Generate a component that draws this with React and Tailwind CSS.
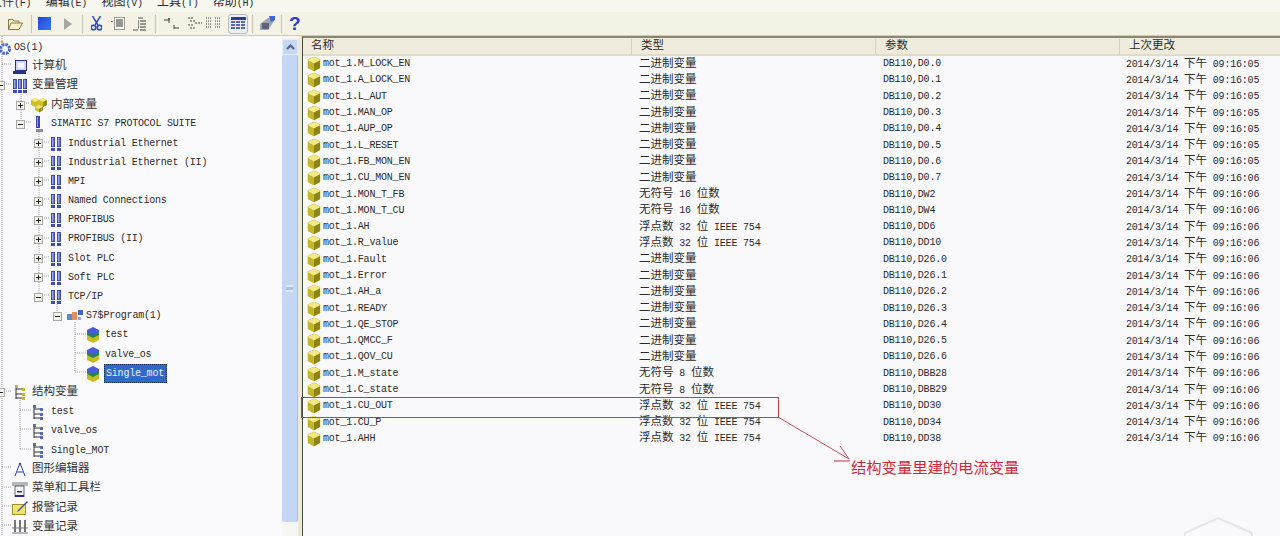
const BIN = "二进制变量";
const U16 = "无符号 16 位数";
const U8 = "无符号 8 位数";
const F32 = "浮点数 32 位 IEEE 754";

const rows = [
  ["M_LOCK_EN", BIN, "D0.0", "05"],
  ["A_LOCK_EN", BIN, "D0.1", "05"],
  ["L_AUT", BIN, "D0.2", "05"],
  ["MAN_OP", BIN, "D0.3", "05"],
  ["AUP_OP", BIN, "D0.4", "05"],
  ["L_RESET", BIN, "D0.5", "05"],
  ["FB_MON_EN", BIN, "D0.6", "05"],
  ["CU_MON_EN", BIN, "D0.7", "06"],
  ["MON_T_FB", U16, "DW2", "06"],
  ["MON_T_CU", U16, "DW4", "06"],
  ["AH", F32, "DD6", "06"],
  ["R_value", F32, "DD10", "06"],
  ["Fault", BIN, "D26.0", "06"],
  ["Error", BIN, "D26.1", "06"],
  ["AH_a", BIN, "D26.2", "06"],
  ["READY", BIN, "D26.3", "06"],
  ["QE_STOP", BIN, "D26.4", "06"],
  ["QMCC_F", BIN, "D26.5", "06"],
  ["QOV_CU", BIN, "D26.6", "06"],
  ["M_state", U8, "DBB28", "06"],
  ["C_state", U8, "DBB29", "06"],
  ["CU_OUT", F32, "DD30", "06"],
  ["CU_P", F32, "DD34", "06"],
  ["AHH", F32, "DD38", "06"],
];

const levels = {
  os: { row: "-ml-[3px]", slot: "w-0", label: "ml-[1px]" },
  l0: { row: "-ml-[4px]", slot: "w-[9px] mr-[7px]", label: "ml-[4px]" },
  l1: { row: "ml-[16px]", slot: "w-[9px] mr-[6px]", label: "ml-[4px]" },
  l2: { row: "ml-[34px]", slot: "w-[9px] mr-[6px]", label: "ml-[3px]" },
  l3: { row: "ml-[53px]", slot: "w-[9px] mr-[5px]", label: "ml-[3px]" },
  l4: { row: "ml-[69px]", slot: "w-[9px] mr-[7px]", label: "ml-[4px]" },
  s1: { row: "ml-[15px]", slot: "w-[9px] mr-[6px]", label: "ml-[5px]" },
};

const tree = [
  { lv: "os", icon: "gear", text: "OS(1)" },
  { lv: "l0", icon: "pc", text: "计算机" },
  { lv: "l0", exp: "-", icon: "bars3", text: "变量管理" },
  { lv: "l1", exp: "+", icon: "cubes", text: "内部变量" },
  { lv: "l1", exp: "-", icon: "bar1", text: "SIMATIC S7 PROTOCOL SUITE" },
  { lv: "l2", exp: "+", icon: "bars2", text: "Industrial Ethernet" },
  { lv: "l2", exp: "+", icon: "bars2", text: "Industrial Ethernet (II)" },
  { lv: "l2", exp: "+", icon: "bars2", text: "MPI" },
  { lv: "l2", exp: "+", icon: "bars2", text: "Named Connections" },
  { lv: "l2", exp: "+", icon: "bars2", text: "PROFIBUS" },
  { lv: "l2", exp: "+", icon: "bars2", text: "PROFIBUS (II)" },
  { lv: "l2", exp: "+", icon: "bars2", text: "Slot PLC" },
  { lv: "l2", exp: "+", icon: "bars2", text: "Soft PLC" },
  { lv: "l2", exp: "-", icon: "bars2", text: "TCP/IP" },
  { lv: "l3", exp: "-", icon: "prog", text: "S7$Program(1)" },
  { lv: "l4", icon: "stack", text: "test" },
  { lv: "l4", icon: "stack", text: "valve_os" },
  { lv: "l4", icon: "stack", text: "Single_mot", selected: true },
  { lv: "l0", exp: "-", icon: "struct", text: "结构变量" },
  { lv: "s1", icon: "ladder", text: "test" },
  { lv: "s1", icon: "ladder", text: "valve_os" },
  { lv: "s1", icon: "ladder", text: "Single_MOT" },
  { lv: "l0", icon: "compass", text: "图形编辑器" },
  { lv: "l0", icon: "menu", text: "菜单和工具栏" },
  { lv: "l0", icon: "alarm", text: "报警记录" },
  { lv: "l0", icon: "log", text: "变量记录" },
];

// CJK runs get their own size, the latin next to them is a narrow mono
function T({ children, cjk = "text-[11.5px]" }) {
  return String(children)
    .split(/([\u4e00-\u9fff]+)/)
    .map((part, i) =>
      /[\u4e00-\u9fff]/.test(part) ? (
        <span key={i} className={`${cjk} leading-none tracking-normal font-['Noto_Sans_CJK_SC',sans-serif]`}>{part}</span>
      ) : (
        <span key={i}>{part}</span>
      )
    );
}

function Cube() {
  return (
    <svg width="14" height="16" viewBox="0 0 14 16">
      <path d="M7 1.5 L12.5 4 V11.5 L7 14.5 L1.5 11.5 V4 Z" fill="#c4b62a" stroke="#c4b62a" strokeWidth="1.6" strokeLinejoin="round" />
      <path d="M7 1.5 L12.5 4 L7 7 L1.5 4 Z" fill="#f3ea86" stroke="#f3ea86" strokeLinejoin="round" />
      <path d="M13 4.5 L7 7.5 V15 L13 12 Z" fill="#8d8416" />
    </svg>
  );
}

function Bars({ n }) {
  const xs = n === 3 ? [1, 6, 11] : n === 2 ? [2, 8] : [5];
  return (
    <svg width="16" height="16" viewBox="0 0 16 16">
      {xs.map((x) => (
        <g key={x}>
          <rect x={x} y="1" width="4" height="10" fill="#3f4cae" />
          <rect x={x + 1} y="2" width="1.5" height="8" fill="#9aa5e4" />
          <rect x={x} y="12" width="4" height="3" fill="#3f4cae" />
        </g>
      ))}
    </svg>
  );
}

function Ladder({ yellow }) {
  const c = yellow ? "#c9b82a" : "#5a68b8";
  return (
    <svg width="14" height="15" viewBox="0 0 14 15">
      <path d="M3 1 V14 M3 4 H11 M3 9 H11 M3 13 H11" stroke="#333" fill="none" />
      <rect x="2" y="0" width="3" height="3" fill={c} />
      <rect x="9" y="3" width="3" height="3" fill={c} />
      <rect x="9" y="8" width="3" height="3" fill={c} />
      <rect x="9" y="12" width="3" height="3" fill={c} />
    </svg>
  );
}

function TreeIcon({ name }) {
  switch (name) {
    case "gear":
      return (
        <svg width="16" height="16" viewBox="0 0 16 16">
          <circle cx="8" cy="9" r="4.5" fill="none" stroke="#4a68c8" strokeWidth="3" strokeDasharray="2.5 1" />
          <circle cx="8" cy="9" r="2" fill="#fff" />
          <circle cx="5" cy="2" r="1.5" fill="#d8b040" />
        </svg>
      );
    case "pc":
      return (
        <svg width="15" height="16" viewBox="0 0 15 16">
          <rect x="2.5" y="1.5" width="11" height="10" fill="#eef0fa" stroke="#2a3480" />
          <rect x="4" y="3" width="8" height="7" fill="#f8f8ff" stroke="#8a90c0" strokeWidth="0.5" />
          <rect x="0" y="12" width="13" height="3" fill="#28308a" />
        </svg>
      );
    case "bars3":
      return <Bars n={3} />;
    case "bars2":
      return <Bars n={2} />;
    case "bar1":
      return (
        <svg width="16" height="16" viewBox="0 0 16 16">
          <rect x="5" y="0" width="4" height="12" fill="#3a47a8" />
          <rect x="6" y="1" width="1" height="10" fill="#8f9be0" />
          <rect x="5" y="13" width="7" height="3" fill="#8a8aa0" />
        </svg>
      );
    case "cubes":
      return (
        <svg width="16" height="16" viewBox="0 0 16 16">
          <path d="M4 1 L8 3 L12 1 L16 3 V8 L12 10 V13 L8 15.5 L4 13 V10 L0 8 V3 Z" fill="#cfc02c" />
          <path d="M4 1 L8 3 L4 5 L0 3 Z M12 1 L16 3 L12 5 L8 3 Z M8 8 L12 10 L8 12 L4 10 Z" fill="#f4e774" />
          <path d="M8 12 V15.5 L12 13 V10 Z M12 5 V10 L16 8 V3 Z" fill="#958a18" />
        </svg>
      );
    case "prog":
      return (
        <svg width="16" height="12" viewBox="0 0 16 12">
          <rect x="0" y="4" width="5" height="6" fill="#5a8ad0" />
          <rect x="5" y="2" width="5" height="8" fill="#e09058" />
          <rect x="11" y="0" width="5" height="5" fill="#3a68d0" />
          <rect x="11" y="7" width="3" height="3" fill="#90a8d8" />
        </svg>
      );
    case "stack":
      return (
        <svg width="14" height="16" viewBox="0 0 14 16">
          <path d="M7 0 L13 3 V7 L7 10 L1 7 V3 Z" fill="#4a5ad8" />
          <path d="M1 5 L7 8 L13 5 V9 L7 12 L1 9 Z" fill="#1e8a50" />
          <path d="M1 8 L7 11 L13 8 V13 L7 16 L1 13 Z" fill="#c9bc20" />
        </svg>
      );
    case "struct":
      return <Ladder yellow />;
    case "ladder":
      return <Ladder />;
    case "compass":
      return (
        <svg width="14" height="16" viewBox="0 0 14 16">
          <path d="M7 1 L2 14 M7 1 L12 14 M4 10 L10 10" stroke="#2a48b8" strokeWidth="1" fill="none" />
          <circle cx="7" cy="2" r="1.3" fill="#555" />
        </svg>
      );
    case "menu":
      return (
        <svg width="16" height="16" viewBox="0 0 16 16">
          <rect x="0" y="1" width="16" height="4" fill="#b8b8c0" />
          <rect x="3" y="5" width="9" height="11" fill="#f4f4f8" stroke="#444" strokeWidth="0.8" />
          <rect x="5" y="10" width="5" height="1.5" fill="#2a3090" />
          <rect x="3" y="14" width="9" height="2" fill="#2a3090" />
        </svg>
      );
    case "alarm":
      return (
        <svg width="16" height="14" viewBox="0 0 16 14">
          <rect x="0.5" y="3.5" width="13" height="10" fill="#f2e26a" stroke="#a09028" />
          <path d="M15 0 L6 9 L5 11 L7 10 L16 1 Z" fill="#3858c0" />
        </svg>
      );
    default:
      return (
        <svg width="16" height="16" viewBox="0 0 16 16">
          <path d="M3 1 V13 M8 1 V13 M13 1 V13" stroke="#555" strokeWidth="1.6" />
          <path d="M0 9 H16 M0 14 H16" stroke="#777" />
        </svg>
      );
  }
}

function Expander({ sign }) {
  return (
    <div className="w-[9px] h-[9px] border border-[#a8a8a8] bg-[#f4f4ec] flex items-center justify-center relative">
      <div className="w-[5px] h-px bg-[#222]" />
      {sign === "+" && <div className="absolute w-px h-[5px] bg-[#222]" />}
    </div>
  );
}

function TreeRow({ item }) {
  const lv = levels[item.lv];
  return (
    <div className={`flex items-center h-[19.2px] leading-[14px] ${lv.row}`}>
      <div className={`shrink-0 ${lv.slot}`}>{item.exp && <Expander sign={item.exp} />}</div>
      <div className="w-[16px] h-[16px] shrink-0 flex items-center justify-center">
        <TreeIcon name={item.icon} />
      </div>
      {item.selected ? (
        <div className="ml-[3px] w-[63px] h-[19px] bg-[#316ac5] text-[#e8f0ff] border border-dotted border-[#1a2a50] flex items-center pl-px whitespace-pre">
          {item.text}
        </div>
      ) : (
        <div className={`whitespace-pre ${lv.label}`}>
          <T cjk="text-[11.5px] text-[#333]">{item.text}</T>
        </div>
      )}
    </div>
  );
}

function TreeLines() {
  return (
    <svg className="absolute left-0 top-0 pointer-events-none" width="282" height="500" viewBox="0 36 282 500">
      <path
        d="M2 36 V536 M2 64 H12 M2 84 H12 M2 391 H12 M2 467 H12 M2 487 H12 M2 506 H12 M2 525 H12
           M21 92 V122 M26 103 H30 M26 122 H32
           M39 130 V295 M44 142 H50 M44 161 H50 M44 180 H50 M44 199 H50 M44 218 H50 M44 238 H50 M44 257 H50 M44 276 H50 M44 295 H50
           M57 300 V315 M75 322 V372 M75 334 H86 M75 353 H86 M75 372 H86
           M20 398 V449 M20 410 H32 M20 429 H32 M20 449 H32"
        stroke="#a0a0a0"
        strokeDasharray="1 1"
        fill="none"
      />
    </svg>
  );
}

function Sep() {
  return <div className="w-px h-[18px] bg-[#c8c5b4] shrink-0" />;
}

function Toolbar() {
  return (
    <div className="h-[23px] bg-[#f4f1e5] flex items-center shrink-0">
      <svg className="ml-[8px] shrink-0" width="15" height="13" viewBox="0 0 15 13">
        <path d="M0.5 2.5 H5 L6 4 H11 V6 M0.5 2.5 V12.5 H11 L14.5 6 H3 L0.5 12.5" fill="#faf0c4" stroke="#8a7a40" />
      </svg>
      <div className="ml-[8px]"><Sep /></div>
      <div className="ml-[6px] w-[13px] h-[13px] bg-gradient-to-br from-[#2a3fe0] to-[#3a7ae8]" />
      <svg className="ml-[13px] shrink-0" width="8" height="12" viewBox="0 0 8 12">
        <path d="M0 0 L8 6 L0 12 Z" fill="#a8a8a0" />
      </svg>
      <div className="ml-[10px]"><Sep /></div>
      <svg className="ml-[8px] shrink-0" width="11" height="15" viewBox="0 0 11 15">
        <path d="M1.5 0 L7 9 M9.5 0 L4 9" stroke="#2e4cc8" strokeWidth="1.5" fill="none" />
        <circle cx="2.5" cy="11.5" r="2.3" fill="none" stroke="#2848c8" strokeWidth="1.6" />
        <circle cx="8.5" cy="11.5" r="2.3" fill="none" stroke="#2848c8" strokeWidth="1.6" />
      </svg>
      <svg className="ml-[9px] shrink-0" width="16" height="13" viewBox="0 0 16 13">
        <rect x="3.5" y="0.5" width="10" height="12" fill="#fbfbf4" stroke="#999" />
        <path d="M5 3 H12 M5 5 H12 M5 7 H12 M5 9 H12" stroke="#333" />
        <rect x="0" y="4" width="2" height="1" fill="#777" />
      </svg>
      <svg className="ml-[6px] shrink-0" width="14" height="14" viewBox="0 0 14 14">
        <path d="M5 1 H10 M0 13 H5" stroke="#555" fill="none" />
        <path d="M7 4 H13 M7 7 H13 M7 10 H13 M7 13 H13" stroke="#333" />
        <rect x="5" y="3" width="1" height="9" fill="#888" />
      </svg>
      <div className="ml-[8px]"><Sep /></div>
      <svg className="ml-[7px] shrink-0" width="17" height="13" viewBox="0 0 17 13">
        <path d="M1 3 H6 V1 M6 1 V6 M11 11 H16 M11 8 V12" stroke="#444" fill="none" />
      </svg>
      <svg className="ml-[7px] shrink-0" width="16" height="13" viewBox="0 0 16 13">
        <path d="M1 1 H6 M3 4 H8 M8 6 H15 M1 8 H6 M3 11 H8" stroke="#444" strokeDasharray="2 1" fill="none" />
      </svg>
      <svg className="ml-[3px] shrink-0" width="16" height="13" viewBox="0 0 16 13">
        <path d="M0 1 H6 M9 1 H15 M0 4 H6 M9 4 H15 M0 7 H6 M9 7 H15 M0 10 H6 M9 10 H15" stroke="#444" strokeDasharray="1 1" fill="none" />
      </svg>
      <div className="ml-[6px] w-[20px] h-[20px] border border-[#b4bccc] bg-[#eef0f4] rounded-[3px] flex items-center justify-center shrink-0">
        <svg width="15" height="13" viewBox="0 0 15 13">
          <rect x="0" y="0" width="15" height="3" fill="#2a3aa0" />
          <path d="M0 5 H15 M0 8 H15 M0 11 H15" stroke="#2a3aa0" strokeWidth="1.4" strokeDasharray="4 1" />
        </svg>
      </div>
      <div className="ml-[4px]"><Sep /></div>
      <svg className="ml-[7px] shrink-0" width="15" height="15" viewBox="0 0 15 15">
        <path d="M0 8 L8 2 H14 V5 L8 14 H0 Z" fill="#9aa4b8" />
        <path d="M2 8 H9 M2 10 H9 M2 12 H9" stroke="#223" />
        <path d="M9 0 H15 V4 L11 6 Z" fill="#3a68d0" />
      </svg>
      <div className="ml-[6px]"><Sep /></div>
      <div className="ml-[7px] w-[11px] text-[19px] leading-none tracking-normal font-bold text-[#2440c8] font-['Liberation_Sans',sans-serif]">?</div>
    </div>
  );
}

export default function App() {
  return (
    <div className="relative w-[1280px] h-[536px] overflow-hidden flex flex-col bg-[#f0ede0] text-[10px] tracking-[-0.2px] text-[#2a2a2a] font-['Liberation_Mono','Noto_Sans_CJK_SC',monospace]">
      {/* menu bar, cut off by the top of the capture */}
      <div className="h-[12px] overflow-hidden shrink-0 bg-[#f8f7f0]">
        <div className="flex gap-[16.7px] -ml-[10px] -mt-[5px] text-[10px] leading-[14px] whitespace-pre">
          {["文件(F)", "编辑(E)", "视图(V)", "工具(T)", "帮助(H)"].map((m) => (
            <div key={m} className="w-[39px]"><T cjk="text-[12px]">{m}</T></div>
          ))}
        </div>
      </div>
      <Toolbar />

      <div className="flex flex-1 min-h-0 border-t border-[#cfcbb8]">
        {/* tree */}
        <div className="relative w-[282px] shrink-0 bg-[#fafafc] overflow-hidden pt-[2px]">
          <TreeLines />
          <div className="relative">
            {tree.map((item) => (
              <TreeRow key={item.lv + item.text} item={item} />
            ))}
          </div>
        </div>

        {/* scrollbar */}
        <div className="w-[16px] shrink-0 flex flex-col bg-[#f6f6f2]">
          <div className="h-[16px] mt-[3px] bg-[#c6d7f4] rounded-[2px] border border-[#e4ecfa] flex items-center justify-center">
            <svg width="9" height="6" viewBox="0 0 9 6">
              <path d="M1 5 L4.5 1.5 L8 5" stroke="#4d6185" strokeWidth="2" fill="none" />
            </svg>
          </div>
          <div className="h-[467px] bg-[#c4d6f5] border-r border-[#aabfe6] rounded-[2px] flex items-center justify-center">
            <div className="w-[7px] h-[7px] border-y-2 border-[#dfe8f8] bg-[#aebfe0]" />
          </div>
        </div>

        {/* splitter */}
        <div className="w-[4px] shrink-0 bg-[#ece9d8]" />

        {/* list */}
        <div className="flex-1 flex flex-col min-w-0 border-l border-t-2 border-l-[#4a4a40] border-t-[#8a8672] bg-[#f9f9fc] leading-[14px]">
          <div className="h-[18px] shrink-0 bg-[#efecde] border-b-2 border-[#e0dcc8] grid grid-cols-[328px_244px_244px_1fr] items-center">
            {["名称", "类型", "参数", "上次更改"].map((h, i) => (
              <div key={h} className={i === 0 ? "pl-[8px]" : "pl-[9px] border-l border-[#d4d0bc]"}>
                <T cjk="text-[11.5px]">{h}</T>
              </div>
            ))}
          </div>
          {rows.map(([name, type, param, sec]) => (
            <div key={name} className="h-[16.3px] shrink-0 grid grid-cols-[328px_244px_244px_1fr] items-center whitespace-pre">
              <div className="flex items-center pl-[4px]">
                <Cube />
                <span className="ml-[2px]">mot_1.{name}</span>
              </div>
              <div className="pl-[8px]"><T>{type}</T></div>
              <div className="pl-[8px]">DB110,{param}</div>
              <div className="pl-[7px]"><T>{`2014/3/14 下午 09:16:${sec}`}</T></div>
            </div>
          ))}
        </div>
      </div>

      {/* red note drawn over the list */}
      <div className="absolute left-[301px] top-[397px] w-[478px] h-[21px] border border-[#c04048]" />
      <svg className="absolute left-[770px] top-[410px]" width="90" height="60" viewBox="770 410 90 60">
        <path d="M778 417 L849 459 M840 446 L849 459" stroke="#c8485c" fill="none" />
        <path d="M834 461 H850" stroke="#d0283c" fill="none" />
      </svg>
      <div className="absolute left-[851px] top-[455px] text-[15.3px] leading-[22px] tracking-normal text-[#d0283c] font-['Noto_Sans_CJK_SC',sans-serif] whitespace-pre">
        结构变量里建的电流变量
      </div>
      {/* faint watermark corner */}
      <svg className="absolute left-[1180px] top-[515px]" width="80" height="21" viewBox="0 0 80 21">
        <path d="M5 21 V18 L38 3 L72 18 V21" stroke="#e6e6e8" strokeWidth="2" fill="none" />
      </svg>
    </div>
  );
}
